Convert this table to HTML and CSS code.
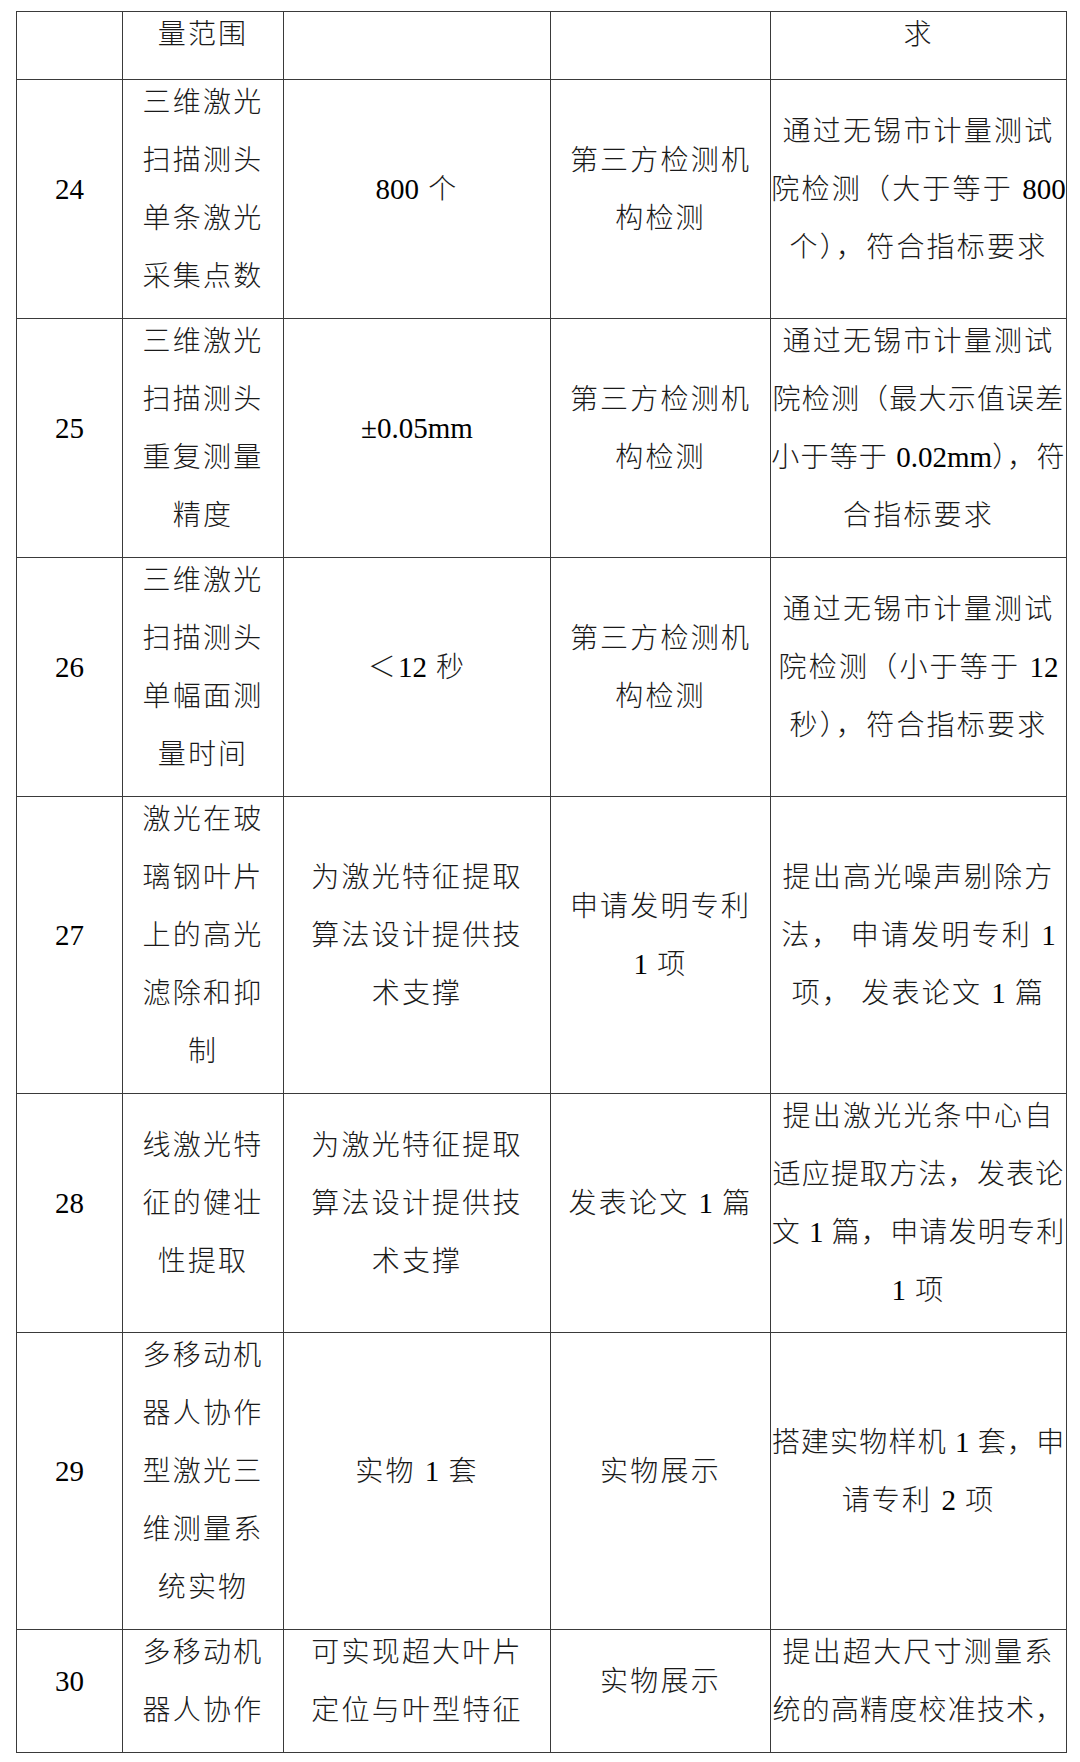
FILE: index.html
```html
<!DOCTYPE html>
<html lang="zh-CN">
<head>
<meta charset="utf-8">
<title>指标检测表</title>
<link rel="stylesheet" href="styles.css">
</head>
<body>
<div class="page">
<table class="spec">
  <colgroup>
    <col class="c1"><col class="c2"><col class="c3"><col class="c4"><col class="c5">
  </colgroup>
  <tbody>
    <tr class="cont">
      <td></td>
      <td><div class="ln">量范围</div></td>
      <td></td>
      <td></td>
      <td><div class="ln">求</div></td>
    </tr>
    <tr>
      <td><div class="ln en">24</div></td>
      <td><div class="ln">三维激光</div><div class="ln">扫描测头</div><div class="ln">单条激光</div><div class="ln">采集点数</div></td>
      <td><div class="ln"><span class="en">800</span> 个</div></td>
      <td><div class="ln">第三方检测机</div><div class="ln">构检测</div></td>
      <td><div class="ln">通过无锡市计量测试</div><div class="ln">院检测（大于等于 <span class="en">800</span></div><div class="ln">个），符合指标要求</div></td>
    </tr>
    <tr>
      <td><div class="ln en">25</div></td>
      <td><div class="ln">三维激光</div><div class="ln">扫描测头</div><div class="ln">重复测量</div><div class="ln">精度</div></td>
      <td><div class="ln en">±0.05mm</div></td>
      <td><div class="ln">第三方检测机</div><div class="ln">构检测</div></td>
      <td><div class="ln">通过无锡市计量测试</div><div class="ln tight">院检测（最大示值误差</div><div class="ln tight">小于等于 <span class="en">0.02mm</span><span class="half">）</span>，符</div><div class="ln">合指标要求</div></td>
    </tr>
    <tr>
      <td><div class="ln en">26</div></td>
      <td><div class="ln">三维激光</div><div class="ln">扫描测头</div><div class="ln">单幅面测</div><div class="ln">量时间</div></td>
      <td><div class="ln">＜<span class="en">12</span> 秒</div></td>
      <td><div class="ln">第三方检测机</div><div class="ln">构检测</div></td>
      <td><div class="ln">通过无锡市计量测试</div><div class="ln">院检测（小于等于 <span class="en">12</span></div><div class="ln">秒），符合指标要求</div></td>
    </tr>
    <tr>
      <td><div class="ln en">27</div></td>
      <td><div class="ln">激光在玻</div><div class="ln">璃钢叶片</div><div class="ln">上的高光</div><div class="ln">滤除和抑</div><div class="ln">制</div></td>
      <td><div class="ln">为激光特征提取</div><div class="ln">算法设计提供技</div><div class="ln">术支撑</div></td>
      <td><div class="ln">申请发明专利</div><div class="ln"><span class="en">1</span> 项</div></td>
      <td><div class="ln">提出高光噪声剔除方</div><div class="ln">法， 申请发明专利 <span class="en">1</span></div><div class="ln">项， 发表论文 <span class="en">1</span> 篇</div></td>
    </tr>
    <tr>
      <td><div class="ln en">28</div></td>
      <td><div class="ln">线激光特</div><div class="ln">征的健壮</div><div class="ln">性提取</div></td>
      <td><div class="ln">为激光特征提取</div><div class="ln">算法设计提供技</div><div class="ln">术支撑</div></td>
      <td><div class="ln">发表论文 <span class="en">1</span> 篇</div></td>
      <td><div class="ln">提出激光光条中心自</div><div class="ln tight">适应提取方法，发表论</div><div class="ln tight">文 <span class="en">1</span> 篇，申请发明专利</div><div class="ln"><span class="en">1</span> 项</div></td>
    </tr>
    <tr>
      <td><div class="ln en">29</div></td>
      <td><div class="ln">多移动机</div><div class="ln">器人协作</div><div class="ln">型激光三</div><div class="ln">维测量系</div><div class="ln">统实物</div></td>
      <td><div class="ln">实物 <span class="en">1</span> 套</div></td>
      <td><div class="ln">实物展示</div></td>
      <td><div class="ln tight">搭建实物样机 <span class="en">1</span> 套，申</div><div class="ln">请专利 <span class="en">2</span> 项</div></td>
    </tr>
    <tr>
      <td><div class="ln en">30</div></td>
      <td><div class="ln">多移动机</div><div class="ln">器人协作</div></td>
      <td><div class="ln">可实现超大叶片</div><div class="ln">定位与叶型特征</div></td>
      <td><div class="ln">实物展示</div></td>
      <td><div class="ln">提出超大尺寸测量系</div><div class="ln tight">统的高精度校准技术，</div></td>
    </tr>
  </tbody>
</table>
</div>
</body>
</html>
```

FILE: styles.css
```css
html, body {
  margin: 0;
  padding: 0;
  background: #ffffff;
}

body {
  font-family: "Liberation Serif", "Noto Sans CJK SC", serif;
  font-size: 28px;
  font-weight: 300;
  color: #1a1a1a;
}

.page {
  padding: 11px 0 0 16px;
}

.spec {
  border-collapse: collapse;
  table-layout: fixed;
  width: 1050px;
}

.c1 { width: 106px; }
.c2 { width: 161px; }
.c3 { width: 267px; }
.c4 { width: 220px; }
.c5 { width: 296px; }

.spec td {
  border: 1px solid #3a3a3a;
  padding: 3px 0;
  vertical-align: middle;
  text-align: center;
}

.spec tr.cont {
  height: 68px;
}

.spec tr.cont td {
  vertical-align: top;
}

.ln {
  height: 58px;
  line-height: 39px;
  white-space: nowrap;
  letter-spacing: 2.2px;
}

.en {
  font-size: 29px;
  letter-spacing: 0;
  color: #000;
}

.tight {
  letter-spacing: 1.2px;
}

.half {
  font-feature-settings: "halt";
}
```
